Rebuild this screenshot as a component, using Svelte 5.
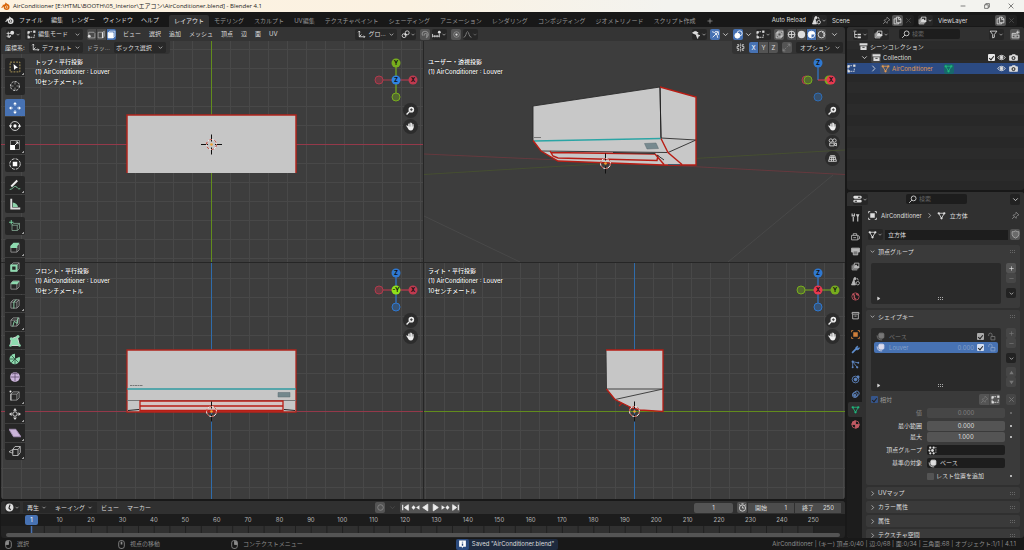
<script lang="ts">
	const chevron = '<path d="M4 6l4 4 4-4"/>'
	const cubeBase = '<path d="M2.500 5.500h8v8h-8zM2.500 5.500l3-3h8l-3 3M13.500 2.500v8l-3 3" stroke="#a5a5a5" stroke-width="1"/>'

	const icons: Record<string, string> = {
		chevron,
		right: '<path d="M6 3l4.500 5L6 13"/>',
		play: '<path d="M5 3l8 5-8 5z" fill="currentColor"/>',
		up: '<path d="M3 12l5-8 5 8z" fill="currentColor" stroke="none"/>',
		down: '<path d="M3 4l5 8 5-8z" fill="currentColor" stroke="none"/>',
		plus: '<path d="M8 3v10M3 8h10"/>',
		minus: '<path d="M3 8h10"/>',
		close: '<path d="M4 4l8 8M12 4l-8 8"/>',
		blender: '<path d="M1 10l8-6.500M3 6h6" stroke-width="2"/><path d="M7.500 1.500l5 4" stroke-width="2"/><circle cx="10" cy="9" r="4" stroke-width="2.500"/><circle cx="10" cy="9" r="1.200" fill="currentColor"/>',
		view3d: '<path d="M1 6h8M1 11h8M4 3v11M8 9l-2 5" /><circle cx="11" cy="5" r="3.500" fill="currentColor" stroke="none"/>',
		edit: '<path d="M2 5v8h9M6 3h4M13 8v5h-2M2 6V4" stroke-dasharray="3 1"/><rect x="1" y="2" width="4" height="4" fill="currentColor" stroke="none"/><rect x="11" y="1" width="4" height="4" fill="currentColor" stroke="none"/><rect x="1" y="11" width="4" height="4" fill="currentColor" stroke="none"/>',
		vert: '<path d="M3 4h9l2 2v8H3z" opacity=".6"/><circle cx="4" cy="11" r="2.500" fill="currentColor" stroke="none"/>',
		edge: '<path d="M2 4h8l3-2v9l-3 3H2z" opacity=".6"/><path d="M10 4v10" stroke-width="2.500"/>',
		face: '<path d="M2 5l3-3h9v9l-3 3z" opacity=".8"/><path d="M2 5h9v9H2z" fill="currentColor"/>',
		axes: '<path d="M4 2v10h10M4 12l4-4M2 4l2-2 2 2M12 10l2 2-2 2"/>',
		pivot: '<circle cx="5.500" cy="10" r="3.500"/><circle cx="11" cy="5" r="3.500"/><circle cx="8" cy="8" r="1.500" fill="currentColor"/>',
		magnet: '<path d="M3 10L2 7a5.500 5.500 0 1 1 9 5l-2 2M6 10a2.500 2.500 0 1 1 3 1" stroke-width="2"/>',
		increment: '<path d="M1 7v6M5 9v4M9 9v4M13 7v6M1 11h12"/><circle cx="13" cy="4" r="2.500" fill="currentColor" stroke="none"/>',
		prop: '<circle cx="8" cy="8" r="5" opacity=".4"/><circle cx="8" cy="8" r="2" fill="currentColor" stroke="none"/>',
		curve: '<path d="M1 13c5 0 4-10 7-10s2 10 7 10"/>',
		visible: '<path d="M1 5q5-5 10 0-5 5-10 0z" fill="currentColor"/><path d="M7 7l7 3-3 1-1 4z" fill="currentColor"/>',
		gizmo: '<path d="M3 13l9-9M7 3h6v6M2 3q9 2 10 11"/>',
		overlay: '<circle cx="6" cy="10" r="4.500" fill="currentColor"/><circle cx="10" cy="6" r="4.500"/>',
		xray: '<path d="M2 5h9v9H2zM5 2h9v9H5z"/>',
		wire: '<circle cx="8" cy="8" r="6"/><path d="M2 8h12M8 2v12"/>',
		solid: '<circle cx="8" cy="8" r="6.500" fill="currentColor" stroke="none"/>',
		material: '<circle cx="8" cy="8" r="6"/><path d="M8 2a6 6 0 0 0 0 12V8h6a6 6 0 0 0-6-6z" fill="currentColor" stroke="none"/>',
		rendered: '<circle cx="8" cy="8" r="6"/><path d="M9 4a4 4 0 0 1 2 7"/>',
		mirror: '<path d="M8 1v14" stroke-dasharray="2 1"/><path d="M2 3h3v3H2v4h3v3H2M14 3h-3v3h3v4h-3v3h3"/>',
		snapauto: '<path d="M3 13L13 3" stroke-dasharray="2 2"/><path d="M2 10v4h4M10 2h4v4"/>',
		scene: '<path d="M5 4l-4 10h7z" fill="currentColor"/><circle cx="7" cy="3" r="2" fill="currentColor"/><circle cx="12" cy="11" r="3"/><path d="M11 2l2 4"/>',
		layer: '<path d="M2 6v8h9M4 4v8h9M6 2h8v8H6z"/><path d="M6 9l3-4 2 3 1-1 2 2v1H6z" fill="currentColor"/>',
		copy: '<path d="M6 2h5l3 3v7H6zM6 5H2v9h8v-2M10 2v4h4"/>',
		pin: '<path d="M9 2l5 5-2 .500-2.500 2.500-.500 3L3.500 7.500l3-.500L9 4zM6 10l-4 4"/>',
		outliner: '<path d="M1 2h5M3 3v10h4M3 8h4" /><path d="M8 8h6M8 13h6" stroke-width="3"/>',
		search: '<circle cx="10" cy="6" r="4.300"/><path d="M7 9l-5 5"/>',
		filter: '<path d="M2 2h12L9.500 8v5l-3 1V8z"/>',
		newcol: '<path d="M2 6h8M2 9h12v5H2zM2 6v3M6 11h4M12 1v6M9 4h6"/>',
		collection: '<path d="M1 2h14v4H1zM2.500 7.500h11V14h-11z" fill="currentColor" stroke="none"/><path d="M6 9.500h4" stroke="#282828"/>',
		archive: '<path d="M2 2.500h12v3H2zM3 6v8h10V6M6 9h4"/>',
		mesh: '<path d="M3 4h10L8 13z"/><g fill="currentColor" stroke="none"><circle cx="3" cy="4" r="2"/><circle cx="13" cy="4" r="2"/><circle cx="8" cy="13" r="2"/></g>',
		eye: '<path d="M1 8q7-8 14 0-7 8-14 0z"/><circle cx="8" cy="8" r="2.500" fill="currentColor"/>',
		camera: '<path d="M1 5h3l2-2h5l1 2h3v8H1z" fill="currentColor"/><circle cx="8" cy="9" r="2.800" fill="#333" stroke="#333"/><circle cx="8" cy="9" r="1" fill="currentColor"/>',
		props: '<path d="M3 4h10M3 11h10" stroke-width="5" stroke-linecap="round"/><path d="M9 4h4M3 11h4" stroke="#222" stroke-width="2"/>',
		tools: '<path d="M4 7v8M2 1v4h4V1M12 7v8" stroke-width="2"/><path d="M8.500 2H15l-2 5h-2z" fill="currentColor" stroke="none"/>',
		render: '<path d="M1 6h11v8H1zM4 6V3h6v3M12 6l3 2v4l-3 1M4 10h5"/>',
		output: '<path d="M1 2h14v7H1z" fill="currentColor"/><path d="M4 7h8v7H4z" fill="#777"/>',
		world: '<circle cx="8" cy="8" r="6.500"/><path d="M3 4q4 1 3 4t3 5M10 2q-1 3 4 4" stroke-width="2.500"/>',
		object: '<path d="M4 4h8v8H4z" fill="currentColor" stroke="none"/><path d="M1 4V1h3M12 1h3v3M15 12v3h-3M4 15H1v-3"/>',
		wrench: '<path d="M2 14l7-7" stroke-width="3"/><path d="M9 8a4 4 0 0 1 3-6L11 5l1 1 3-1a4 4 0 0 1-6 3z" fill="currentColor"/>',
		particles: '<path d="M3 3l10 2M3 3l8 10M3 3v10"/><g fill="currentColor" stroke="none"><circle cx="3" cy="3" r="2"/><circle cx="13" cy="5" r="1.700"/><circle cx="11" cy="13" r="2"/><circle cx="3" cy="13" r="1.700"/></g>',
		physics: '<circle cx="8" cy="8" r="6"/><circle cx="8" cy="8" r="2.500" fill="currentColor"/><circle cx="12.500" cy="3.500" r="2" fill="currentColor"/>',
		constraint: '<ellipse cx="9" cy="7" rx="6" ry="4.500" transform="rotate(-35 9 7)"/><circle cx="7" cy="9" r="4.500"/><circle cx="7" cy="9" r="1.500" fill="currentColor"/>',
		sphere: '<circle cx="8" cy="8" r="6.500"/><path d="M8 1.500A6.500 6.500 0 0 0 1.500 8H8zM8 8v6.500A6.500 6.500 0 0 0 14.500 8z" fill="currentColor"/>',
		shield: '<path d="M8 1.500q3 2 6 1.500v5q0 4-6 6.500Q2 12 2 8V3q3 .500 6-1.500z" stroke="#aaa" fill="#6a6a6a"/>',
		shapekey: '<path d="M2 6q0 9 9 8"/><rect x="5" y="2" width="9" height="9" rx="2" fill="currentColor"/>',
		unlock: '<path d="M7 8h7v6H7zM9 8V5a3 3 0 0 0-6 0v2"/>',
		group: '<g fill="currentColor" stroke="none"><circle cx="4" cy="3" r="2"/><circle cx="10" cy="3" r="2"/><circle cx="2.500" cy="8" r="2"/><circle cx="8" cy="8" r="2.500"/><circle cx="4" cy="13" r="2"/><circle cx="10" cy="13" r="2"/></g><path d="M14 2v12" stroke-dasharray="2 2"/>',
		clock: '<circle cx="8" cy="8" r="7" fill="currentColor" stroke="none"/><path d="M9 3L7 9l3 3" stroke="#222" stroke-width="2"/>',
		timer: '<circle cx="8" cy="9" r="5.500"/><path d="M8 6v3h3M6 1.500h4M2 3l2 1M14 3l-2 1"/>',
		record: '<circle cx="8" cy="8" r="5"/>',
		first: '<path d="M3 3v10" stroke-width="2"/><path d="M13 3v10L6 8z" fill="currentColor"/>',
		prevkey: '<path d="M1 8l3.500-4L8 8l-3.500 4zM15 4v8L9 8z" fill="currentColor" stroke="none"/>',
		back: '<path d="M12 2v12L3 8z" fill="currentColor"/>',
		forward: '<path d="M4 2v12l9-6z" fill="currentColor"/>',
		nextkey: '<path d="M15 8l-3.500-4L8 8l3.500 4zM1 4v8l6-4z" fill="currentColor" stroke="none"/>',
		last: '<path d="M13 3v10" stroke-width="2"/><path d="M3 3v10l7-5z" fill="currentColor"/>',
		mouseL: '<rect x="3" y="1" width="10" height="14" rx="4"/><path d="M4 2h4v6H3z" fill="currentColor"/>',
		mouseM: '<rect x="3" y="1" width="10" height="14" rx="4"/><path d="M8 3v5" stroke-width="3"/>',
		mouseR: '<rect x="3" y="1" width="10" height="14" rx="4"/><path d="M8 2h4l1 6H8z" fill="currentColor"/>',
		info: '<path d="M2 1h12v11H9l-2 3v-3H2z" fill="#fff" stroke="none"/><path d="M8 3v1.500M8 6v4" stroke="#2b4a7d" stroke-width="2.500"/>',
		zoom: '<circle cx="9.500" cy="6.500" r="5" fill="#eee" stroke="none"/><path d="M6 10l-5 5" stroke="#eee" stroke-width="2.500"/><path d="M9.500 4v5M7 6.500h5" stroke="#333"/>',
		hand: '<path d="M3.500 9L1.500 7M5 9V3.500M7.500 8V2M10 8V2.500M12.500 9V4.500" stroke="#eee" stroke-width="2" stroke-linecap="round"/><path d="M3 8h10.500q0 7-5 7T2.500 8z" fill="#eee" stroke="none"/>',
		film: '<circle cx="5" cy="4.500" r="3" stroke="#ddd"/><circle cx="11.500" cy="4.500" r="3" stroke="#ddd"/><path d="M3 9h8v5H3zM11 11l4-2v5l-4-2z" stroke="#ddd"/>',
		persp: '<path d="M4 3h8l3 10H1zM7 3L6 13M9 3l1 10M3 6h10M2 9.500h12" stroke="#ddd"/>',
		// toolbar
		select: '<path d="M1.500 1.500h13v13h-13z" stroke="#b8a25a" stroke-dasharray="2.500 1.500"/><path d="M6 4l6 5-3 .500L7 12z" fill="#fff" stroke="none"/>',
		cursor: '<circle cx="8" cy="8" r="6" stroke="#ddd" stroke-dasharray="3 1.500"/><path d="M8 2v4M8 10v4M2 8h4M10 8h4" stroke="#aaa" stroke-width="1"/>',
		move: '<path d="M8 5V2.500M8 11v2.500M5 8H2.500M11 8h2.500" stroke="#fff"/><path d="M8 0l2.500 3h-5zM8 16l2.500-3h-5zM0 8l3-2.500v5zM16 8l-3-2.500v5z" fill="#fff" stroke="none"/>',
		rotate: '<circle cx="8" cy="8" r="6" stroke="#ddd" stroke-dasharray="15 4"/><circle cx="8" cy="8" r="2.200" fill="#fff" stroke="none"/><path d="M0 7h4l-2 4zM16 9h-4l2-4z" fill="#fff" stroke="none"/>',
		scale: '<path d="M2 2h12v12H2z" stroke="#999"/><path d="M1.500 8H8v6.500H1.500z" fill="#fff" stroke="none"/><path d="M8 8l4-4M9 4h3v3" stroke="#fff"/>',
		transform: '<circle cx="8" cy="8" r="7" stroke="#ddd" stroke-dasharray="4 1.500"/><path d="M5 5h6v6H5z" fill="#fff" stroke="none"/>',
		annotate: '<path d="M3 10l8-8" stroke="#eee" stroke-width="2.500"/><path d="M1 14c4 0 5-5 8-4s2 4 6 3" stroke="#7fcca0"/>',
		measure: '<path d="M3 1v13h12" stroke="#ddd" stroke-width="2.500"/><path d="M5 12V6q6 1 7 6z" fill="#8ed3ab" stroke="none"/>',
		addcube: '<path d="M4 7h7v7H4zM4 7l2-2.500h8L11 7M14 4.500v7L11 14" stroke="#8ab09a" stroke-width="1"/><path d="M3 0v6M0 3h6" stroke="#7fdca8"/>',
		extrude: cubeBase + '<path d="M2 5l4-4h8l-3 4v3H2z" fill="#8edbb0" stroke="none"/>',
		inset: cubeBase + '<path d="M3 6h7v7H3z" stroke="#8edbb0" stroke-width="2.500"/>',
		bevel: cubeBase + '<path d="M2 7l3-4h9l-3 4z" fill="#8edbb0" stroke="none"/>',
		loopcut: cubeBase + '<path d="M6.500 14V5.500l3-3.500" stroke="#8edbb0"/>',
		knife: cubeBase + '<path d="M5 14l2-7 4 3 1-8" stroke="#8edbb0"/>',
		polybuild: '<path d="M3 5l8-3 3 12H2z" fill="#8edbb0"/><g fill="#8edbb0" stroke="none"><circle cx="3" cy="5" r="2"/><circle cx="12" cy="2" r="2"/><circle cx="14" cy="14" r="1.700"/><circle cx="2" cy="14" r="1.700"/></g>',
		spin: '<path d="M8 8V1a7 7 0 1 0 6 4z" fill="#8edbb0" stroke="none"/><path d="M8 8v7M8 8H1M8 8L3 3M8 8l-5 5M8 8l5 5" stroke="#2a4a38" stroke-width="1"/>',
		smooth: '<circle cx="8" cy="8" r="6.500" fill="#cbb5da" stroke="none"/><path d="M2 8h12M8 2v12M4 4q4-2 8 0" stroke="#5c4a68" stroke-width="1"/>',
		slide: cubeBase + '<path d="M2.500 5v9" stroke="#ddd"/><circle cx="2" cy="2" r="1.300" fill="#fff" stroke="none"/>',
		shrink: '<circle cx="8" cy="8" r="3" stroke="#ddd"/><path d="M8 0l2.500 3.500h-5zM8 16l2.500-3.500h-5zM0 8l3.500-2.500v5zM16 8l-3.500-2.500v5z" fill="#ddd" stroke="none"/>',
		shear: '<path d="M0 3h9l7 10H6z" fill="#cbb5da" stroke="#a590b5"/>',
		rip: '<path d="M5 6l3-4h7v8l-3 4H5zM5 6h7v8M15 2l-3 4M0 9l5-3v5z" stroke="#bbb" stroke-width="1.200"/>',
	}

	const menus = ['ファイル', '編集', 'レンダー', 'ウィンドウ', 'ヘルプ']
	const workspaces = ['レイアウト', 'モデリング', 'スカルプト', 'UV編集', 'テクスチャペイント', 'シェーディング', 'アニメーション', 'レンダリング', 'コンポジティング', 'ジオメトリノード', 'スクリプト作成']
	const viewMenus = ['ビュー', '選択', '追加', 'メッシュ', '頂点', '辺', '面', 'UV']

	const toolGroups = [
		['select', 'cursor'],
		['move', 'rotate', 'scale', 'transform'],
		['annotate', 'measure'],
		['addcube'],
		['extrude', 'inset', 'bevel', 'loopcut', 'knife', 'polybuild', 'spin', 'smooth', 'slide', 'shrink', 'shear', 'rip'],
	]
	const nested = ['select', 'scale', 'annotate', 'addcube', 'extrude', 'loopcut', 'knife', 'slide', 'shrink', 'shear', 'rip']

	const red = '#e8384f'
	const green = '#78ad1e'
	const blue = '#2f83e3'

	const quads = [
		{ id: 'top', title: 'トップ・平行投影', scale: true, box: [1, 41, 422, 221], origin: [211.5, 144.5], h: '#94394a', v: '#628c1c' },
		{ id: 'user', title: 'ユーザー・透視投影', scale: false, box: [424, 41, 421, 221], origin: [605.5, 163.5] },
		{ id: 'front', title: 'フロント・平行投影', scale: true, box: [1, 263, 422, 236], origin: [211.5, 411.5], h: '#94394a', v: '#2f6cab' },
		{ id: 'right', title: 'ライト・平行投影', scale: true, box: [424, 263, 421, 236], origin: [634.5, 411.5], h: '#628c1c', v: '#2f6cab' },
	]

	const gridPath = ([x, y, w, h]: number[], [ox, oy]: number[]) => {
		let d = ''
		for (let i = -24; i <= 24; i++) {
			if (i === 0) continue
			const gx = ox + i * 19
			const gy = oy + i * 19
			if (gx > x && gx < x + w) d += `M${gx} ${y}v${h}`
			if (gy > y && gy < y + h) d += `M${x} ${gy}h${w}`
		}
		return d
	}

	const gizmos: Record<string, { x: number, y: number, c: string, t?: string, line?: boolean, hollow?: boolean }[]> = {
		top: [
			{ x: -17, y: 0, c: '#b03a4c', line: true, hollow: true },
			{ x: 0, y: 17, c: green, line: true, hollow: true },
			{ x: 17, y: 0, c: '#c03a50', t: 'X', line: true },
			{ x: 0, y: -17, c: green, t: 'Y', line: true },
			{ x: 0, y: 0, c: blue, t: 'Z' },
		],
		user: [
			{ x: -12, y: 0, c: '#b03a4c', hollow: true },
			{ x: 0, y: 17, c: '#2f6db5', hollow: true },
			{ x: 0, y: -17, c: '#2f78d0', t: 'Z', line: true },
			{ x: -10, y: 0, c: green, hollow: true },
			{ x: 11, y: 0, c: green },
			{ x: 13, y: 0, c: red, t: 'X', line: true },
		],
		front: [
			{ x: -17, y: 0, c: '#b03a4c', line: true, hollow: true },
			{ x: 0, y: 17, c: '#2f78d0', line: true, hollow: true },
			{ x: 17, y: 0, c: '#c03a50', t: 'X', line: true },
			{ x: 0, y: -17, c: '#2f78d0', t: 'Z', line: true },
			{ x: 0, y: 0, c: '#8fe01a', t: '-Y' },
		],
		right: [
			{ x: -17, y: 0, c: green, line: true, hollow: true },
			{ x: 0, y: 17, c: '#2f78d0', line: true, hollow: true },
			{ x: 17, y: 0, c: green, t: 'Y', line: true },
			{ x: 0, y: -17, c: '#2f78d0', t: 'Z', line: true },
			{ x: 0, y: 0, c: red, t: 'X' },
		],
	}

	const propTabs = [
		['tools', '#c8c8c8', 'gap'],
		['render', '#b8b8b8'],
		['output', '#b8b8b8'],
		['layer', '#b8b8b8'],
		['scene', '#b8b8b8'],
		['world', '#b5505a', 'gap'],
		['archive', '#c8c8c8', 'gap'],
		['object', '#d07f3a'],
		['wrench', '#5f8fd0'],
		['particles', '#5f86c0'],
		['physics', '#5f86c0'],
		['constraint', '#5f86c0'],
		['mesh', '#1fb67c', 'active'],
		['sphere', '#c05a64'],
	]

	const closedPanels = ['UVマップ', 'カラー属性', '属性', 'テクスチャ空間']
	const frames = Array.from({ length: 25 }, (_, i) => (i + 1) * 10)
	const transport = ['first', 'prevkey', 'back', 'forward', 'nextkey', 'last']
	const stats = 'AirConditioner | (キー) 頂点:0/40 | 辺:0/68 | 面:0/34 | 三角面:68 | オブジェクト:1/1 | 4.1.1'

	let tool = $state('move')
	let workspace = $state('レイアウト')
</script>


{#snippet ic(name: string)}
	<svg class="ic" viewBox="0 0 16 16" aria-hidden="true">{@html icons[name]}</svg>
{/snippet}

{#snippet pick(label: string, text: string, icon = '')}
	<span class="pick">
		{#if icon}{@render ic(icon)}{/if}
		<select aria-label={label}><option>{text}</option></select>
		{@render ic('chevron')}
	</span>
{/snippet}

{#snippet drop(label: string, icon: string)}
	<button class="drop" aria-label={label}>{@render ic(icon)}{@render ic('chevron')}</button>
{/snippet}

{#snippet tip(x: number, y: number)}
	<g fill="none">
		<path d="M{x} {y - 10}v7M{x} {y + 3}v7" stroke="#111" />
		<circle cx={x} cy={y} r="5" stroke="#eee" />
		<circle cx={x} cy={y} r="5" stroke="#c0392b" stroke-dasharray="2.600 2.600" />
		<circle cx={x} cy={y} r="1.300" fill="#f0a030" />
	</g>
{/snippet}


<div class="app">
	<header class="title">
		<svg class="ic" viewBox="0 0 16 16" fill="none" aria-hidden="true">{@html icons.blender}</svg>
		<span>AirConditioner [E:\HTML\BOOTH\05_Interior\エアコン\AirConditioner.blend] - Blender 4.1</span>
		<div class="window">
			<button aria-label="最小化"><svg viewBox="0 0 10 10"><path d="M1 5h8" /></svg></button>
			<button aria-label="元に戻す"><svg viewBox="0 0 10 10"><path d="M1 3h6v6H1zM3 3V1h6v6H7" /></svg></button>
			<button aria-label="閉じる"><svg viewBox="0 0 10 10"><path d="M1 1l8 8M9 1L1 9" /></svg></button>
		</div>
	</header>

	<nav class="topbar">
		<button class="logo" aria-label="Blender">{@render ic('blender')}</button>
		{#each menus as menu}
			<button class="menu">{menu}</button>
		{/each}
		<div class="tabs">
			{#each workspaces as name}
				<button class:active={name === workspace} onclick={() => workspace = name}>{name}</button>
			{/each}
			<button aria-label="追加" class="add">{@render ic('plus')}</button>
		</div>
		<span class="reload">Auto Reload</span>
		<div class="datablock">
			{@render drop('シーン', 'scene')}
			<input aria-label="シーン名" value="Scene" />
			<button class="dim" aria-label="ピン">{@render ic('pin')}</button>
			<button class="raised" aria-label="新規シーン">{@render ic('copy')}</button>
			<button class="faint" aria-label="シーン削除">{@render ic('close')}</button>
		</div>
		<div class="datablock">
			{@render drop('ビューレイヤー', 'layer')}
			<input aria-label="ビューレイヤー名" value="ViewLayer" />
			<button class="raised" aria-label="新規レイヤー">{@render ic('copy')}</button>
			<button class="faint" aria-label="レイヤー削除">{@render ic('close')}</button>
		</div>
	</nav>

	<main>
		<div class="left">
			<section class="viewport">
				<div class="bar viewbar">
					<div class="set">
						{@render drop('エディタータイプ', 'view3d')}
						<div class="mode">{@render pick('モード', '編集モード', 'edit')}</div>
						<div class="joined">
							<button aria-label="頂点選択">{@render ic('vert')}</button>
							<button aria-label="辺選択">{@render ic('edge')}</button>
							<button class="on" aria-label="面選択">{@render ic('face')}</button>
						</div>
						<div class="menus">
							{#each viewMenus as menu}
								<button class="menu">{menu}</button>
							{/each}
						</div>
					</div>
					<div class="set">
						<div class="orient">{@render pick('座標系', 'グロ...', 'axes')}</div>
						{@render drop('ピボット', 'pivot')}
						<div class="set tight">
							<button class="sq raised dim" aria-label="スナップ">{@render ic('magnet')}</button>
							{@render drop('スナップ先', 'increment')}
						</div>
						<div class="set tight">
							<button class="sq raised" aria-label="プロポーショナル">{@render ic('prop')}</button>
							<span class="dim">{@render drop('減衰', 'curve')}</span>
						</div>
					</div>
					<div class="set end">
						{@render drop('表示設定', 'visible')}
						<div class="set tight">
							<button class="sq on" aria-label="ギズモ">{@render ic('gizmo')}</button>
							<button class="sq" aria-label="ギズモ設定">{@render ic('chevron')}</button>
						</div>
						<div class="set tight">
							<button class="sq on" aria-label="オーバーレイ">{@render ic('overlay')}</button>
							<button class="sq" aria-label="オーバーレイ設定">{@render ic('chevron')}</button>
						</div>
						{@render drop('メッシュ編集', 'edit')}
						<button class="sq raised" aria-label="透過">{@render ic('xray')}</button>
						<div class="joined">
							<button aria-label="ワイヤー">{@render ic('wire')}</button>
							<button aria-label="ソリッド">{@render ic('solid')}</button>
							<button class="on" aria-label="マテリアル">{@render ic('material')}</button>
							<button aria-label="レンダー">{@render ic('rendered')}</button>
						</div>
						<button class="sq" aria-label="シェーディング設定">{@render ic('chevron')}</button>
					</div>
				</div>

				<div class="views">
					{#each quads as quad}
						{@const [ox, oy] = quad.origin}
						<div class="quad {quad.id}">
							<svg class="scene" viewBox={quad.box.join(' ')} preserveAspectRatio="xMidYMid slice" aria-hidden="true">
								{#if quad.h}
									<path d={gridPath(quad.box, quad.origin)} stroke="#484848" />
									<rect x={quad.box[0]} y={oy - 0.5} width={quad.box[2]} height="1" fill={quad.h} />
									<rect x={ox - 0.5} y={quad.box[1]} width="1" height={quad.box[3]} fill={quad.v} />
								{/if}
								{#if quad.id === 'top'}
									<path d="M127 115h169v58H127z" fill="#c6c6c6" />
									<path d="M127 173v-58h169v58" fill="none" stroke="#b0241c" stroke-width="1.500" />
									<path d="M201 144.500h7M215 144.500h7" stroke="#111" />
								{:else if quad.id === 'front'}
									<path d="M127 350h169v62H127z" fill="#c6c6c6" stroke="#b0241c" stroke-width="1.300" />
									<path d="M127 389h169" stroke="#2f9aa0" stroke-width="1.300" />
									<path d="M127 400.500h169" stroke="#777" />
									<path d="M130 385.500h13" stroke="#777" stroke-dasharray="2 .500" />
									<path d="M278 392.500h12v4.500h-12z" fill="#73878c" stroke="#5d6d72" stroke-width=".500" />
									<path d="M128 410.500l11-1M284 409.500l11 1" stroke="#222" />
									<path d="M140 401v10h143v-10z" fill="#d5c5c3" stroke="#b81d14" stroke-width="1.300" />
									<path d="M140 406h143M140 410.500h143" stroke="#b81d14" stroke-width="1.500" />
								{:else if quad.id === 'right'}
									<path d="M606 350h57v61.500l-23-1.500-8-2-17-8.500-8.500-10.500z" fill="#c6c6c6" />
									<path d="M606 350l.500 39M606.500 389H663M615 399.500l48-10.500" fill="none" stroke="#333" stroke-width=".900" />
									<path d="M606 350h57v61.500l-23-1.500-8-2-17-8.500-8.500-10.500M619 406l3-3M629 409l2-2" fill="none" stroke="#b81d14" stroke-width="1.300" />
								{:else}
									<path d="M424 174.500L605 163.500L845 150" stroke="#47532f" stroke-width=".800" fill="none" />
									<path d="M424 154L605 162L845 174.500" stroke="#70393f" stroke-width=".800" fill="none" />
									<path d="M833 175L728 262M424 216L520 262" stroke="#4b4b4b" stroke-width=".800" fill="none" />
									<path d="M533 106L660 87L696 97V165H663L558 161L541 151L533 140z" fill="#c8c8c8" />
									<path d="M533 140V106L660 87L661 138L696 140L668 152.500M541 151L667 152.500" fill="none" stroke="#2b2b2b" stroke-width=".900" />
									<path d="M660 87L661 138.500" stroke="#222" />
									<path d="M534 141L661 138.500" stroke="#2ba5a5" stroke-width="1.500" />
									<path d="M534 137.500h7" stroke="#777" />
									<path d="M644.500 143.500L656 143L658.500 148.500L647 149z" fill="#76898f" stroke="#5d6d72" stroke-width=".500" />
									<path d="M660 87L696 97V165L663 165L558 161L541 151L533 140.500M661 138.500L668 152.500L682 164.500M551 152.500L655 154L664 164.500M558 158L657 160.500L658 155M550 151l3 5 5 2" fill="none" stroke="#b81d14" stroke-width="1.400" />
									<path d="M613 152.500l42 1M657 155l7 5" stroke="#333" />
									<path d="M668 164.500h12" stroke="#456" />
								{/if}
								{@render tip(ox, oy)}
							</svg>

							<div class="label">
								<p>{quad.title}</p>
								<p>(1) AirConditioner : Louver</p>
								{#if quad.scale}<p>10センチメートル</p>{/if}
							</div>

							<div class="nav">
								<svg class="gizmo" viewBox="-22 -22 44 44">
									{#each gizmos[quad.id] as node}
										{#if node.line}<path d="M0 0L{node.x} {node.y}" stroke={node.c} stroke-width="1.200" />{/if}
										{#if node.hollow}<circle cx={node.x} cy={node.y} r="4" fill="#3d3d3d" />{/if}
										<circle cx={node.x} cy={node.y} r={node.hollow ? 4 : 4.5} fill={node.c} fill-opacity={node.hollow ? 0.4 : 1} stroke={node.c} stroke-width={node.hollow ? 1 : 0} />
										{#if node.t}<text x={node.x} y={node.y + 2}>{node.t}</text>{/if}
									{/each}
								</svg>
								<button aria-label="ズーム">{@render ic('zoom')}</button>
								<button aria-label="移動">{@render ic('hand')}</button>
								{#if quad.id === 'user'}
									<button aria-label="カメラ">{@render ic('film')}</button>
									<button aria-label="透視投影">{@render ic('persp')}</button>
								{/if}
							</div>
						</div>
					{/each}

					<div class="settings">
						<span>座標系:</span>
						<div class="default">{@render pick('座標系', 'デフォルト', 'axes')}</div>
						<span class="soft">ドラッ...</span>
						<div class="drag">{@render pick('ドラッグ', 'ボックス選択')}</div>
					</div>

					<div class="settings options">
						{@render ic('mirror')}
						<div class="joined">
							<button class="on">X</button>
							<button>Y</button>
							<button>Z</button>
						</div>
						<button class="sq raised dim" aria-label="自動マージ">{@render ic('snapauto')}</button>
						<button class="optbtn">オプション{@render ic('chevron')}</button>
					</div>

					<div class="toolbar">
						{#each toolGroups as group}
							<div class="group" style:flex-grow={group.length}>
								{#each group as name}
									<button class:on={tool === name} class:nested={nested.includes(name)} aria-label={name} onclick={() => tool = name}>{@render ic(name)}</button>
								{/each}
							</div>
						{/each}
					</div>
				</div>
			</section>

			<section class="timeline">
				<div class="bar">
					<div class="set tl">
						{@render drop('タイムライン', 'clock')}
						<button class="menu dd play-menu">再生{@render ic('chevron')}</button>
						<button class="menu dd">キーイング{@render ic('chevron')}</button>
						<button class="menu">ビュー</button>
						<button class="menu">マーカー</button>
					</div>
					<div class="set play">
						<button class="sq raised dim" aria-label="自動キー">{@render ic('record')}</button>
						<button class="sq faint" aria-label="自動キー設定">{@render ic('chevron')}</button>
						<div class="joined transport">
							{#each transport as name}
								<button aria-label={name}>{@render ic(name)}</button>
							{/each}
						</div>
					</div>
					<div class="set range">
						<input class="current" aria-label="現在のフレーム" value="1" />
						<button class="sq raised" aria-label="プレビュー範囲">{@render ic('timer')}</button>
						<label>開始<input value="1" /></label>
						<label>終了<input value="250" /></label>
					</div>
				</div>
				<div class="ruler">
					<span class="badge">1</span>
					<div class="numbers">
						{#each frames as frame}<span>{frame}</span>{/each}
					</div>
				</div>
				<svg class="track" viewBox="1 526 844 7" preserveAspectRatio="none" aria-hidden="true">
					<path d="M31 526h783v7H31z" fill="#303030" />
					{#each frames as _, i}
						<path d="M{60 + i * 31.4} 526v7M{44.3 + i * 31.4} 526v7" stroke="#202020" />
					{/each}
					<path d="M31.500 526v7" stroke="#4772b3" stroke-width="1.500" />
				</svg>
				<div class="scroll"></div>
			</section>
		</div>

		<div class="side">
			<section class="outliner">
				<div class="bar">
					{@render drop('アウトライナー', 'outliner')}
					{@render drop('表示モード', 'layer')}
					<label class="search">{@render ic('search')}<input aria-label="検索" placeholder="検索" /></label>
					{@render drop('フィルター', 'filter')}
					<button class="sq raised" aria-label="新規コレクション">{@render ic('newcol')}</button>
				</div>
				<ul>
					<li class="d0"><span></span>{@render ic('collection')}<b>シーンコレクション</b></li>
					<li class="d1"><span></span>{@render ic('chevron')}<i class="chip">{@render ic('collection')}</i><b>Collection</b>
						<input type="checkbox" checked aria-label="Collection" />{@render ic('eye')}{@render ic('camera')}</li>
					<li class="d2 selected"><span>{@render ic('edit')}</span>{@render ic('right')}<i class="chip orange">{@render ic('mesh')}</i><b class="orange">AirConditioner</b><i class="chip teal">{@render ic('mesh')}</i>
						<em></em>{@render ic('eye')}{@render ic('camera')}</li>
				</ul>
			</section>

			<section class="props">
				<div class="bar">
					{@render drop('プロパティ', 'props')}
					<label class="search">{@render ic('search')}<input aria-label="検索" placeholder="検索" /></label>
					<button class="sq dark" aria-label="オプション">{@render ic('chevron')}</button>
				</div>
				<div class="cols">
					<nav>
						{#each propTabs as [name, color, extra]}
							<button class={extra} style:color aria-label={name}>{@render ic(name)}</button>
						{/each}
					</nav>
					<div class="content">
						<div class="crumbs">
							{@render ic('object')}<span>AirConditioner</span>{@render ic('right')}{@render ic('mesh')}<span>立方体</span>
							<button class="sq dim" aria-label="ピン">{@render ic('pin')}</button>
						</div>
						<div class="name">
							{@render drop('メッシュ', 'mesh')}
							<input aria-label="メッシュ名" value="立方体" />
							<button class="sq raised" aria-label="フェイクユーザー">{@render ic('shield')}</button>
						</div>

						<div class="panel">
							<button class="head">{@render ic('chevron')}頂点グループ<u></u></button>
							<div class="listrow">
								<div class="list short"><div class="foot">{@render ic('play')}<u></u></div></div>
								<div class="ops">
									<button class="raised" aria-label="追加">{@render ic('plus')}</button>
									<button class="off" aria-label="削除">{@render ic('minus')}</button>
									<button class="dark" aria-label="メニュー">{@render ic('chevron')}</button>
								</div>
							</div>
						</div>

						<div class="panel">
							<button class="head">{@render ic('chevron')}シェイプキー<u></u></button>
							<div class="listrow">
								<div class="list">
									<div class="key">{@render ic('shapekey')}<span>ベース</span><input type="checkbox" checked aria-label="ベース" />{@render ic('unlock')}</div>
									<div class="key active">{@render ic('shapekey')}<span>Louver</span><span class="val">0.000</span><input type="checkbox" checked aria-label="Louver" />{@render ic('unlock')}</div>
									<div class="foot">{@render ic('play')}<u></u></div>
								</div>
								<div class="ops">
									<button class="off" aria-label="追加">{@render ic('plus')}</button>
									<button class="off" aria-label="削除">{@render ic('minus')}</button>
									<button class="dark" aria-label="メニュー">{@render ic('chevron')}</button>
									<button class="off" aria-label="上へ">{@render ic('up')}</button>
									<button class="off" aria-label="下へ">{@render ic('down')}</button>
								</div>
							</div>
							<div class="relative">
								<label><input type="checkbox" checked />相対</label>
								<div class="joined off"><button aria-label="固定">{@render ic('pin')}</button><button class="lit" aria-label="編集モード">{@render ic('edit')}</button></div>
								<button class="sq off" aria-label="クリア">{@render ic('close')}</button>
							</div>
							<div class="field faded"><label for="value">値</label><input id="value" value="0.000" /><s></s></div>
							<div class="field pair"><label for="min">最小範囲</label><input id="min" value="0.000" /><s></s></div>
							<div class="field"><label for="max">最大</label><input id="max" value="1.000" /><s></s></div>
							<div class="field ref"><label for="vgroup">頂点グループ</label><div>{@render ic('group')}<input id="vgroup" value="" /></div></div>
							<div class="field ref"><label for="base">基準の対象</label><div>{@render ic('shapekey')}<input id="base" value="ベース" /></div></div>
							<div class="field rest"><span></span><label><input type="checkbox" />レスト位置を追加</label><s></s></div>
						</div>

						{#each closedPanels as name}
							<div class="panel closed">
								<button class="head">{@render ic('right')}{name}<u></u></button>
							</div>
						{/each}
					</div>
				</div>
			</section>
		</div>
	</main>

	<footer>
		<div class="hints">
			<span>{@render ic('mouseL')}選択</span>
			<span>{@render ic('mouseM')}視点の移動</span>
			<span>{@render ic('mouseR')}コンテクストメニュー</span>
		</div>
		<div class="saved"><i>{@render ic('info')}</i>Saved "AirConditioner.blend"</div>
		<div class="stats">{stats}</div>
	</footer>
</div>


<style>
	:global(body) {
		margin: 0;
		background: #181818;
	}

	.app {
		height: 100vh;
		display: grid;
		grid-template-rows: 12px 15px minmax(0, 1fr) 12px;
		overflow: hidden;
		background: #181818;
		color: #dedede;
		font: 6px/10px Inter, "Noto Sans CJK JP", sans-serif;
		white-space: nowrap;
	}

	.app * {
		box-sizing: border-box;
	}

	button, input, select {
		margin: 0;
		padding: 0;
		border: 0;
		min-width: 0;
		background: none;
		color: inherit;
		font: inherit;
		outline: none;
	}

	button {
		display: flex;
		align-items: center;
		justify-content: center;
		white-space: nowrap;
	}

	select {
		appearance: none;
		flex: 1;
		height: 11px;
	}

	p {
		margin: 0;
	}

	i, em, b {
		font-style: normal;
		font-weight: 400;
	}

	.ic {
		width: 9px;
		height: 9px;
		flex: none;
		fill: none;
		stroke: currentColor;
		stroke-width: 1.5;
	}

	input[type="checkbox"] {
		appearance: none;
		width: 7px;
		height: 7px;
		flex: none;
		border-radius: 1px;
		background: #545454;

		&:checked {
			background: #e6e6e6;
		}

		&:checked::after {
			content: "";
			display: block;
			width: 2px;
			height: 4px;
			margin: 1px 0 0 2px;
			border: solid #222;
			border-width: 0 1px 1px 0;
			transform: rotate(40deg);
		}
	}

	.title {
		display: flex;
		align-items: center;
		gap: 3px;
		padding-left: 1px;
		background: linear-gradient(90deg, #fdf2e0, #fbf2e2 40%, #f3f3ef 65%);
		color: #222;
		font: 6px/12px "Open Sans", "Noto Sans CJK JP", sans-serif;

		& .ic {
			color: #d8660a;
		}
	}

	.window {
		display: flex;
		gap: 18px;
		margin-left: auto;
		padding-right: 10px;

		& svg {
			width: 6px;
			height: 6px;
			fill: none;
			stroke: #333;
		}
	}

	.topbar {
		display: flex;
		align-items: center;
		padding: 1px 7px 0 4px;
	}

	.logo {
		width: 11px;
	}

	.menu {
		height: 11px;
		padding: 0 4px;
	}

	.tabs {
		display: flex;
		align-self: flex-end;
		margin-left: 6px;

		& button {
			height: 12px;
			padding: 0 5px;
			border-radius: 2px 2px 0 0;
			color: #999;
		}

		& .active {
			background: #303030;
			color: #eee;
		}

		& .ic {
			width: 8px;
			height: 8px;
		}
	}

	.reload {
		margin-left: auto;
		margin-right: 6px;
	}

	.datablock {
		display: flex;
		align-items: center;
		width: 102px;
		height: 11px;
		margin-right: 4px;
		border-radius: 2px;
		background: #1f1f1f;

		&:last-child {
			width: 99px;
			margin-right: 0;
		}

		& input {
			flex: 1;
			width: 0;
			height: 11px;
			padding-left: 5px;
		}

		& button {
			height: 11px;
		}

		& > button:not(.drop) {
			width: 11px;
		}
	}

	.drop {
		height: 11px;
		border-radius: 2px;
		background: #262626;

		& .ic + .ic {
			width: 6px;
		}
	}

	.raised {
		border-radius: 2px;
		background: #545454;
	}

	.dark {
		border-radius: 2px;
		background: #222;
	}

	.dim {
		color: #8a8a8a;
	}

	.faint {
		color: #4c4c4c;
	}

	.on {
		background: #4772b3 !important;
		color: #fff;
	}

	.off {
		border-radius: 2px;
		background: #464646;
		color: #777;
	}

	main {
		display: grid;
		grid-template-columns: minmax(0, 1fr) 177px;
		gap: 2px;
		padding-left: 1px;
		min-height: 0;
	}

	.left {
		display: grid;
		grid-template-rows: minmax(0, 1fr) auto;
		gap: 2px;
		min-height: 0;
	}

	.viewport {
		display: grid;
		grid-template-rows: 14px minmax(0, 1fr);
		min-height: 0;
		border-radius: 3px;
		overflow: hidden;
	}

	.bar {
		display: flex;
		align-items: center;
		height: 13px;
		padding: 0 4px;
		background: #303030;
	}

	.viewbar {
		display: grid;
		grid-template-columns: 63fr auto 65fr;
		height: 14px;
		padding: 0 6px 0 5px;
		background: #343434;
	}

	.set {
		display: flex;
		align-items: center;
		gap: 4px;
	}

	.tight {
		gap: 2px;
	}

	.end {
		justify-content: flex-end;
		gap: 3px;

		& .tight {
			gap: 0;
		}
	}

	.sq {
		width: 10px;
		height: 11px;
		flex: none;
		border-radius: 2px;
	}

	.pick {
		display: flex;
		align-items: center;
		gap: 2px;
		height: 11px;
		padding: 0 2px;
		border-radius: 2px;
		background: #282828;

		& .ic:last-child {
			width: 7px;
		}
	}

	.mode {
		width: 58px;
	}

	.orient {
		width: 42px;
	}

	.joined {
		display: flex;
		gap: 1px;
		border-radius: 2px;
		overflow: hidden;

		& button {
			width: 9px;
			height: 11px;
			background: #545454;
		}
	}

	.viewbar .joined button {
		background: #4a4a4a;
	}

	.menus {
		display: flex;
		margin-left: -1px;
	}

	.views {
		position: relative;
		display: grid;
		grid-template-columns: 422fr 421fr;
		grid-template-rows: 221fr 236fr;
		gap: 1px;
		min-height: 0;
		background: #262626;
	}

	.quad {
		position: relative;
		min-height: 0;
		background: #3d3d3d;
		overflow: hidden;
	}

	.scene {
		position: absolute;
		width: 100%;
		height: 100%;
	}

	.label {
		position: absolute;
		top: 3px;
		left: 4px;
		color: #fff;
		font-weight: 500;
		text-shadow: 0 0 1px #000;
	}

	.top .label, .user .label {
		top: 16px;
	}

	.top .label, .front .label {
		left: 34px;
	}

	.nav {
		position: absolute;
		top: 5px;
		right: 5px;
		display: grid;
		justify-items: end;
		gap: 1px;

		& button {
			width: 15px;
			height: 15px;
			border-radius: 50%;
			background: #2c2c2c;
		}
	}

	.top .nav, .user .nav {
		top: 17px;
	}

	.gizmo {
		width: 44px;
		height: 44px;

		& text {
			fill: #101010;
			font: 700 6px Inter, sans-serif;
			text-anchor: middle;
		}
	}

	.settings {
		position: absolute;
		top: 0;
		left: 0;
		display: flex;
		align-items: center;
		gap: 4px;
		height: 13px;
		padding: 0 4px;
		background: #323232e6;
		border-radius: 0 0 3px 0;
	}

	.soft {
		color: #aaa;
	}

	.default {
		width: 54px;
	}

	.drag {
		width: 52px;
	}

	.options {
		left: auto;
		right: 0;
		padding-right: 2px;
		border-radius: 0 0 0 3px;
	}

	.optbtn {
		gap: 4px;
		height: 11px;
		padding: 0 2px 0 4px;
		border-radius: 2px;
		background: #262626;

		& .ic {
			width: 7px;
		}
	}

	.toolbar {
		position: absolute;
		top: 17px;
		bottom: 0;
		left: 4px;
		width: 20px;
		max-height: 402px;
		display: flex;
		flex-direction: column;
		gap: 4px;
	}

	.group {
		flex-basis: 0;
		display: flex;
		flex-direction: column;
		gap: 1px;
		border-radius: 2px;
		overflow: hidden;

		& button {
			flex: 1;
			min-height: 0;
			background: #262626;
		}

		& .ic {
			width: 12px;
			height: 12px;
			stroke-width: 1.2;
		}
	}

	.nested {
		background: linear-gradient(135deg, transparent 90%, #999 90%) right 1px bottom 1px / 14px 14px no-repeat, #262626 !important;
	}

	.timeline {
		border-radius: 3px;
		background: #232323;
		overflow: hidden;

		& .bar {
			display: grid;
			grid-template-columns: 37fr auto 38fr;
		}
	}

	.tl {
		gap: 0;
	}

	.dd {
		gap: 2px;
		background: #282828;

		& .ic {
			width: 6px;
		}
	}

	.play-menu {
		margin-left: 3px;
	}

	.play {
		gap: 2px;
	}

	.transport {
		gap: 0;
		margin-left: 1px;

		& button {
			width: 10px;
			color: #eee;
		}
	}

	.range {
		justify-content: flex-end;
		gap: 1px;

		& .current {
			width: 39px;
			height: 10px;
			margin-right: 3px;
			border-radius: 2px;
			background: #545454;
			text-align: center;
		}

		& label {
			display: flex;
			width: 46px;
			height: 10px;
			padding: 0 7px;
			background: #4c4c4c;
		}

		& label input {
			flex: 1;
			width: 0;
			text-align: right;
		}
	}

	.ruler {
		display: grid;
		grid-template-columns: 43px 1fr 16px;
		align-items: center;
		height: 12px;
		background: #1c1c1c;
		color: #b4b4b4;
	}

	.badge {
		width: 13px;
		margin-left: 24px;
		border-radius: 2px;
		background: #4772b3;
		color: #fff;
		text-align: center;
	}

	.numbers {
		display: grid;
		grid-template-columns: repeat(25, 1fr);
		text-align: center;
	}

	.track {
		display: block;
		width: 100%;
		height: 7px;
	}

	.scroll {
		height: 4px;
		margin: 0 5px 1px;
		border-radius: 2px;
		background: #545454;
	}

	.side {
		display: grid;
		grid-template-rows: 163fr 346fr;
		gap: 2px;
		min-height: 0;
	}

	.outliner, .props {
		min-height: 0;
		border-radius: 3px;
		overflow: hidden;
	}

	.side .bar {
		gap: 6px;
		height: 14px;
		padding: 0 4px 0 6px;
	}

	.search {
		display: flex;
		align-items: center;
		gap: 2px;
		width: 61px;
		height: 10px;
		margin: 0 auto 0 6px;
		padding-left: 2px;
		border-radius: 2px;
		background: #1d1d1d;

		& input {
			flex: 1;
			width: 0;
		}

		& input::placeholder {
			color: #666;
			opacity: 1;
		}
	}

	.outliner {
		background: repeating-linear-gradient(#282828 0 11px, #2b2b2b 11px 22px);

		& .search {
			margin-left: 4px;
		}

		& ul {
			margin: 0;
			padding: 0;
			list-style: none;
		}

		& li {
			display: flex;
			align-items: center;
			gap: 2px;
			height: 11px;
			padding-right: 6px;
		}

		& li > span {
			width: 10px;
			display: flex;
		}

		& li > input {
			margin-left: auto;
		}

		& em {
			margin-left: auto;
		}

		& li > .ic:last-child {
			margin-left: 1px;
		}

		& .d1 > span {
			width: 11px;
		}

		& .d2 > span {
			width: 20px;
		}

		& .selected {
			background: #2c4b83;
		}
	}

	.chip {
		display: flex;
		justify-content: center;
		width: 10px;
		height: 10px;
		align-items: center;
		border-radius: 2px;
		background: #5a5a5a80;
	}

	.orange {
		color: #e09850;
	}

	.teal {
		margin-left: 9px;
		color: #1fb67c;
		background: #17696b;
	}

	.props {
		display: grid;
		grid-template-rows: 14px minmax(0, 1fr);
		background: #303030;

		& .search {
			margin-left: 32px;
		}
	}

	.cols {
		display: grid;
		grid-template-columns: 15px minmax(0, 1fr);
		min-height: 0;

		& nav {
			padding-top: 4px;
			background: #1c1c1c;
		}

		& nav button {
			width: 14px;
			height: 15px;
			margin-left: 1px;
			border-radius: 2px 0 0 2px;
		}

		& nav .gap {
			margin-bottom: 4px;
		}

		& nav .active {
			background: #303030;
		}
	}

	.content {
		min-width: 0;
		padding: 4px 4px 0;
		overflow: hidden;
	}

	.crumbs, .name {
		display: flex;
		align-items: center;
		gap: 4px;
		height: 11px;
		padding-left: 2px;

		& button:last-child {
			margin-left: auto;
		}
	}

	.crumbs > .ic:nth-of-type(2) {
		width: 7px;
	}

	.name {
		gap: 2px;
		margin: 8px 0 5px;

		& input {
			flex: 1;
			width: 0;
			height: 10px;
			padding-left: 3px;
			background: #1d1d1d;
		}
	}

	.panel {
		margin-bottom: 2px;
		padding-bottom: 4px;
		border-radius: 2px;
		background: #3a3a3a;

		& .head {
			gap: 2px;
			width: 100%;
			height: 13px;
			justify-content: flex-start;
			padding: 0 4px 0 3px;
		}

		& .head .ic {
			width: 7px;
		}

		& .head u {
			margin-left: auto;
		}
	}

	.panel.closed {
		padding: 0;

		& .head {
			height: 12px;
		}
	}

	u {
		--dot: #666;
		width: 6px;
		height: 3px;
		background:
			linear-gradient(90deg, var(--dot) 1px, transparent 0) top / 2px 1px repeat-x,
			linear-gradient(90deg, var(--dot) 1px, transparent 0) bottom / 2px 1px repeat-x;
	}

	.listrow {
		display: flex;
		justify-content: space-between;
		margin-top: 5px;
		padding: 0 4px 0 5px;
	}

	.list {
		display: flex;
		flex-direction: column;
		flex: 1;
		height: 63px;
		margin-right: 5px;
		padding: 3px;
		border-radius: 2px;
		background: #2a2a2a;
	}

	.short {
		height: 41px;
	}

	.foot {
		display: flex;
		align-items: center;
		justify-content: space-between;
		margin-top: auto;
		padding: 0 54px 0 2px;

		& .ic {
			width: 5px;
			height: 5px;
		}

		& u {
			--dot: #aaa;
		}
	}

	.key {
		display: flex;
		align-items: center;
		gap: 3px;
		height: 11px;
		padding: 0 2px;
		color: #777;

		& span:first-of-type {
			flex: 1;
			padding-left: 1px;
		}

		& input:checked {
			background: #aaa;
		}
	}

	.key.active {
		border-radius: 2px;
		background: #4772b3;
		color: #86a0c8;

		& .ic:first-child {
			color: #dde;
		}

		& input:checked {
			background: #d5def0;
		}
	}

	.ops {
		width: 10px;

		& button {
			width: 10px;
			height: 10px;
		}

		& .ic {
			width: 7px;
		}

		& .dark {
			margin: 5px 0 4px;
		}
	}

	.relative {
		display: flex;
		align-items: center;
		height: 11px;
		margin-top: 3px;
		padding: 0 4px 0 5px;
		color: #999;

		& label {
			display: flex;
			align-items: center;
			gap: 2px;
		}

		& input:checked {
			background: #36558a;
		}

		& .joined {
			margin: 0 6px 0 auto;
		}

		& .joined button {
			width: 10px;
		}

		& .lit {
			color: #ddd;
		}
	}

	.field {
		display: grid;
		grid-template-columns: 56px minmax(0, 1fr) 10px;
		column-gap: 5px;
		align-items: center;
		height: 10px;

		& > label:first-child {
			text-align: right;
		}

		& > input {
			width: 100%;
			height: 10px;
			border-radius: 2px;
			background: #545454;
			text-align: center;
		}

		& s {
			width: 2px;
			height: 2px;
			border-radius: 50%;
			background: #ddd;
		}
	}

	.faded {
		margin: 3px 0;
		color: #808080;

		& > input {
			background: #464646;
		}

		& s {
			background: #777;
		}
	}

	.pair {
		margin-bottom: 1px;
	}

	.ref {
		margin-top: 3px;

		& div {
			display: flex;
			align-items: center;
			height: 10px;
			padding-left: 1px;
			border-radius: 2px;
			background: #1d1d1d;
		}

		& input {
			flex: 1;
			width: 0;
			padding-left: 3px;
		}
	}

	.rest {
		margin: 3px 0 0;

		& label {
			display: flex;
			align-items: center;
			gap: 2px;
		}
	}

	footer {
		display: grid;
		grid-template-columns: minmax(0, 1fr) auto minmax(0, 1fr);
		align-items: center;
		padding: 0 8px 0 4px;
		color: #8c8c8c;
	}

	.hints {
		display: flex;

		& span {
			display: flex;
			align-items: center;
			gap: 4px;
			width: 113px;
		}
	}

	.saved {
		display: flex;
		align-items: center;
		gap: 3px;
		margin-right: 6px;
		padding-right: 4px;
		border-radius: 2px;
		background: #1e2a3e;
		color: #ddd;

		& i {
			display: flex;
			padding: 1px 2px;
			border-radius: 2px;
			background: #2b4a7d;
		}
	}

	.stats {
		text-align: right;
	}
</style>
